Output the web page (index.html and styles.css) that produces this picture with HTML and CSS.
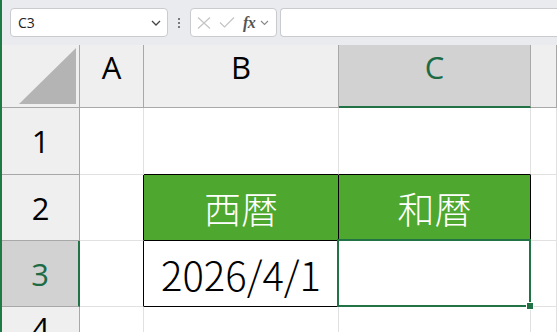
FILE: index.html
```html
<!DOCTYPE html>
<html lang="ja">
<head>
<meta charset="utf-8">
<link rel="stylesheet" href="styles.css">
</head>
<body>
<div class="app">
  <div class="toolbar">
    <div class="namebox">
      <span class="ref">C3</span>
      <svg class="chev" width="10" height="6" viewBox="0 0 10 6"><path d="M1 1 L5 5 L9 1" fill="none" stroke="#444" stroke-width="1.3"/></svg>
    </div>
    <div class="dots"><span></span><span></span><span></span></div>
    <div class="fbtns">
      <svg width="14" height="12" viewBox="0 0 14 12"><path d="M1 0.5 L13 11.5 M13 0.5 L1 11.5" stroke="#c4c4c4" stroke-width="1.2" fill="none"/></svg>
      <svg width="16" height="11" viewBox="0 0 16 11"><path d="M1 5.5 L5.5 10 L15 0.5" stroke="#c4c4c4" stroke-width="1.2" fill="none"/></svg>
      <span class="fx">fx</span>
      <svg width="9" height="6" viewBox="0 0 9 6"><path d="M1 1 L4.5 4.5 L8 1" fill="none" stroke="#888" stroke-width="1.1"/></svg>
    </div>
    <div class="finput"></div>
  </div>
  <div class="sheet">
    <div class="hd corner"><svg width="57" height="56" viewBox="0 0 57 56"><polygon points="57,0 57,56 0,56" fill="#b4b4b4"/></svg></div>
    <div class="hd col">A</div>
    <div class="hd col">B</div>
    <div class="hd col sel-col">C</div>
    <div class="hd col"></div>

    <div class="hd row">1</div>
    <div class="c"></div>
    <div class="c bbk"></div>
    <div class="c bbk"></div>
    <div class="c"></div>

    <div class="hd row">2</div>
    <div class="c brk"></div>
    <div class="c green brk bbk">西暦</div>
    <div class="c green brk bbk">和暦</div>
    <div class="c"></div>

    <div class="hd row sel-row">3</div>
    <div class="c brk"></div>
    <div class="c brk bbk val">2026/4/1</div>
    <div class="c brk bbk active"></div>
    <div class="c"></div>

    <div class="hd row">4</div>
    <div class="c"></div>
    <div class="c"></div>
    <div class="c"></div>
    <div class="c"></div>
  </div>
</div>
</body>
</html>
```
FILE: styles.css
```css
* { box-sizing: border-box; }
html, body { margin: 0; padding: 0; }
body { width: 557px; height: 332px; overflow: hidden; background: #fff; font-family: "Noto Sans", sans-serif; }
.app { height: 332px; border-left: 2px solid #1e7b45; display: flex; flex-direction: column; }
.toolbar { height: 45px; flex: none; background: #e9ebee; display: flex; align-items: flex-start; padding: 8px 0 0 8px; }
.namebox { width: 158px; height: 29px; background: #fff; border: 1px solid #c9cbce; border-radius: 4px; display: flex; align-items: center; justify-content: space-between; padding: 0 6px 0 7px; }
.ref { font-family: "Open Sans", "Noto Sans", sans-serif; font-size: 14px; color: #222; }
.dots { width: 22px; height: 29px; display: flex; flex-direction: column; align-items: center; justify-content: center; gap: 2px; }
.dots span { width: 2px; height: 2px; background: #555; border-radius: 1px; }
.fbtns { width: 87px; height: 29px; background: #fff; border: 1px solid #c9cbce; border-radius: 4px; display: flex; align-items: center; padding: 0 4px 0 6px; }
.fbtns svg:first-child { margin-right: 8px; }
.fbtns svg:nth-child(2) { margin-right: 8px; }
.fx { font-family: "Liberation Serif", serif; font-style: italic; font-weight: bold; font-size: 16px; color: #555; margin-right: 5px; letter-spacing: -0.5px; }
.finput { flex: 1; height: 29px; margin-left: 3px; background: #fff; border: 1px solid #c9cbce; border-right: none; border-radius: 4px 0 0 4px; }
.sheet { flex: 1; display: grid; grid-template-columns: 78px 64px 195px 192px 1fr; grid-template-rows: 63px 67px 66px 66px 1fr; }
.hd { background: #efefef; border-right: 1px solid #a8a8a8; border-bottom: 1px solid #a8a8a8; display: flex; align-items: center; justify-content: center; color: #000; }
.corner { align-items: flex-end; justify-content: flex-end; padding: 0 3px 3px 0; }
.col { font-family: "Open Sans", "Noto Sans", sans-serif; font-size: 31px; align-items: flex-start; padding-top: 1px; }
.row { font-family: "Open Sans", "Noto Sans", sans-serif; font-size: 31px; }
.sel-col { background: #d2d2d2; color: #1d6b44; border-bottom: 2px solid #217346; }
.sel-row { background: #d2d2d2; color: #1d6b44; border-right: 2px solid #217346; }
.c { border-right: 1px solid #e1e1e1; border-bottom: 1px solid #e1e1e1; display: flex; align-items: center; justify-content: center; font-family: "Noto Sans CJK JP", sans-serif; font-weight: 300; font-size: 37px; color: #000; }
.brk { border-right-color: #000; }
.bbk { border-bottom-color: #000; }
.green { background: #4ea72e; color: #fff; }
.val { font-size: 40px; }
.active { position: relative; }
.active::after { content: ""; position: absolute; left: -2px; top: -2px; right: -1px; bottom: -1px; border: 2px solid #217346; }
.active::before { content: ""; position: absolute; right: -4px; bottom: -4px; width: 6px; height: 6px; background: #217346; border: 1px solid #fff; z-index: 1; }
```
